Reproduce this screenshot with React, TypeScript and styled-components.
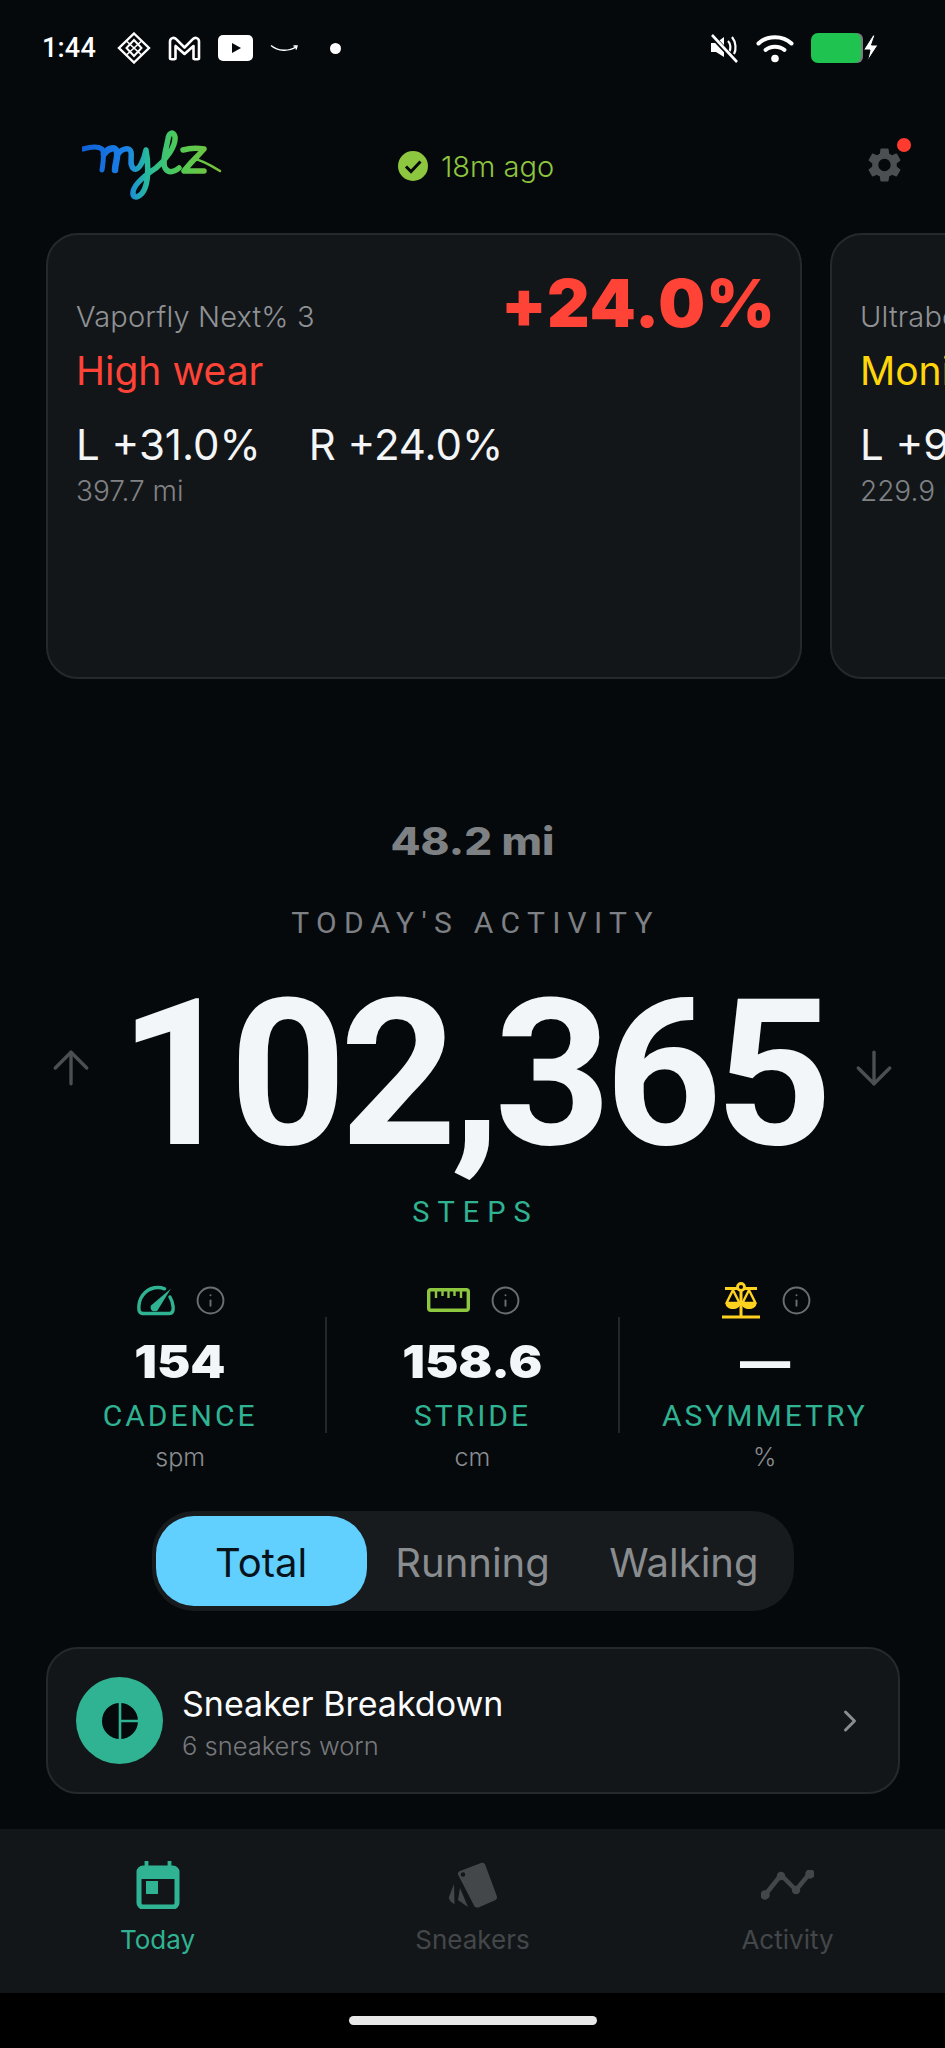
import React from 'react';
import styled, { createGlobalStyle } from 'styled-components';
import { ArrowDown, ArrowUp, ChevronRight, Info } from 'lucide-react';
import { MdSettings } from 'react-icons/md';

const teal = '#2fb392';
const lime = '#8dc63f';
const bodyFont = 'Inter, "Noto Sans", sans-serif';

const Global = createGlobalStyle`
  html, body { margin: 0; padding: 0; background: #06090c; }
  * { box-sizing: border-box; }
`;

const S = {
  Screen: styled.div`
    width: 945px;
    height: 2048px;
    overflow: hidden;
    display: flex;
    flex-direction: column;
    background: #06090c;
    color: #fff;
    font-family: ${bodyFont};
  `,
  StatusBar: styled.div`
    height: 96px;
    flex-shrink: 0;
    display: flex;
    align-items: center;
    padding: 0 64px 0 42px;
  `,
  Time: styled.span`
    font-family: Roboto, sans-serif;
    font-weight: 500;
    font-size: 27px;
    letter-spacing: 0.2px;
    margin-right: 21px;
  `,
  StatusLeft: styled.div`
    display: flex;
    align-items: center;
    gap: 17px;
  `,
  StatusDot: styled.span`
    width: 11px;
    height: 11px;
    margin-left: 14px;
    border-radius: 50%;
    background: #fff;
  `,
  StatusRight: styled.div`
    display: flex;
    align-items: center;
    gap: 17px;
    margin-left: auto;
  `,
  Header: styled.header`
    height: 137px;
    flex-shrink: 0;
    display: grid;
    grid-template-columns: 1fr auto 1fr;
    align-items: center;
    padding: 0 40px 0 47px;
  `,
  LogoSlot: styled.div`
    padding-left: 35px;
    display: flex;
  `,
  Synced: styled.div`
    display: flex;
    align-items: center;
    gap: 13px;
    padding-top: 3px;
    color: ${lime};
    font-size: 29px;
    font-weight: 300;
  `,
  GearWrap: styled.div`
    position: relative;
    justify-self: end;
    width: 41px;
    height: 44px;
    display: flex;
    align-items: center;
    justify-content: center;
    color: #4b4f52;
  `,
  GearDot: styled.span`
    position: absolute;
    top: -5px;
    right: -6px;
    width: 14px;
    height: 14px;
    border-radius: 50%;
    background: #ff3b30;
  `,
  Carousel: styled.div`
    display: flex;
    gap: 28px;
    padding-left: 46px;
    overflow: hidden;
    flex-shrink: 0;
  `,
  WearCard: styled.article`
    width: 756px;
    height: 446px;
    flex-shrink: 0;
    padding: 30px 24px 0 28px;
    background: #131619;
    border: 2px solid #26292c;
    border-radius: 32px;
  `,
  CardTop: styled.div`
    display: flex;
    justify-content: space-between;
    align-items: baseline;
  `,
  ShoeName: styled.div`
    font-size: 29px;
    font-weight: 300;
    letter-spacing: 0.15px;
    color: #8f9295;
  `,
  WearValue: styled.div<{ $color: string }>`
    font-weight: 900;
    font-size: 66px;
    line-height: 76px;
    letter-spacing: 1px;
    color: ${(p) => p.$color};
  `,
  WearStatus: styled.div<{ $color: string }>`
    font-size: 39px;
    line-height: 50px;
    margin-top: 5px;
    color: ${(p) => p.$color};
  `,
  Feet: styled.div`
    display: flex;
    gap: 48px;
    margin-top: 24px;
    font-size: 42px;
    line-height: 50px;
    color: #f3f5f7;
  `,
  Miles: styled.div`
    font-size: 28px;
    line-height: 36px;
    margin-top: 3px;
    font-weight: 300;
    color: #808285;
  `,
  Distance: styled.div`
    margin-top: 140px;
    text-align: center;
    font-weight: 800;
    font-size: 38px;
    line-height: 44px;
    color: #7e8184;
    transform: scaleX(1.15);
  `,
  Eyebrow: styled.div`
    margin-top: 40px;
    padding-left: 6px;
    text-align: center;
    font-family: Roboto, sans-serif;
    font-size: 30px;
    line-height: 40px;
    letter-spacing: 7.3px;
    color: #7d8084;
  `,
  HeroRow: styled.div`
    margin-top: 25px;
    height: 200px;
    display: flex;
    align-items: center;
    justify-content: space-between;
    padding: 0 44px;
    color: #4b4f52;
  `,
  Hero: styled.div`
    margin-top: 13px;
    font-family: Roboto, sans-serif;
    font-weight: 700;
    font-size: 204px;
    line-height: 200px;
    letter-spacing: -6.5px;
    color: #f3f6f9;
  `,
  StepsLabel: styled.div`
    margin-top: 24px;
    padding-left: 6px;
    text-align: center;
    font-family: Roboto, sans-serif;
    font-size: 29px;
    line-height: 40px;
    letter-spacing: 8px;
    color: ${teal};
  `,
  Stats: styled.section`
    margin-top: 50px;
    display: grid;
    grid-template-columns: 1fr 2px 1fr 2px 1fr;
    padding: 0 35px;
    height: 190px;
  `,
  Stat: styled.div`
    display: flex;
    flex-direction: column;
    align-items: center;
  `,
  StatDivider: styled.div`
    width: 2px;
    height: 116px;
    margin-top: 35px;
    background: #24272a;
  `,
  StatIcons: styled.div`
    height: 36px;
    display: flex;
    align-items: center;
    gap: 20px;
    padding-left: 3px;
    color: #6b6e71;
  `,
  StatValue: styled.div`
    margin-top: 18px;
    font-weight: 900;
    font-size: 46px;
    line-height: 50px;
    color: #f3f6f9;
    transform: scaleX(1.09);
  `,
  StatLabel: styled.div`
    margin-top: 12px;
    font-family: Roboto, sans-serif;
    font-size: 30px;
    line-height: 36px;
    letter-spacing: 3px;
    color: ${teal};
  `,
  StatUnit: styled.div`
    margin-top: 6px;
    font-size: 25px;
    line-height: 34px;
    font-weight: 300;
    color: #8a8d90;
  `,
  Segmented: styled.div`
    margin: 39px auto 0;
    width: 642px;
    height: 100px;
    padding: 5px 4px;
    display: grid;
    grid-template-columns: repeat(3, 1fr);
    background: #181b1e;
    border-radius: 42px;
    flex-shrink: 0;
  `,
  Segment: styled.div<{ $active?: boolean }>`
    display: flex;
    align-items: center;
    justify-content: center;
    padding-top: 3px;
    border-radius: 38px;
    font-size: 40px;
    background: ${(p) => (p.$active ? '#62d0ff' : 'transparent')};
    color: ${(p) => (p.$active ? '#07131b' : '#8a8d90')};
  `,
  Breakdown: styled.div`
    margin: 36px 45px 0 46px;
    height: 147px;
    flex-shrink: 0;
    display: flex;
    align-items: center;
    padding: 0 30px 0 28px;
    gap: 19px;
    background: #131619;
    border: 2px solid #26292c;
    border-radius: 32px;
    color: #8a8d90;
  `,
  BreakdownBadge: styled.div`
    width: 87px;
    height: 87px;
    flex-shrink: 0;
    border-radius: 50%;
    background: ${teal};
    display: flex;
    align-items: center;
    justify-content: center;
  `,
  BreakdownText: styled.div`
    flex: 1;
    padding-top: 5px;
  `,
  BreakdownTitle: styled.div`
    font-size: 34px;
    line-height: 46px;
    color: #fbfcfd;
  `,
  BreakdownSub: styled.div`
    font-size: 25.5px;
    line-height: 38px;
    font-weight: 300;
    color: #77797c;
  `,
  TabBar: styled.nav`
    margin-top: 35px;
    height: 164px;
    flex-shrink: 0;
    display: grid;
    grid-template-columns: repeat(3, 1fr);
    background: #131619;
  `,
  Tab: styled.div<{ $active?: boolean }>`
    display: flex;
    flex-direction: column;
    align-items: center;
    color: ${(p) => (p.$active ? teal : '#43474a')};
    font-size: 26px;
  `,
  TabIcon: styled.div`
    height: 50px;
    margin-top: 31px;
    display: flex;
    align-items: center;
    justify-content: center;
  `,
  TabLabel: styled.div`
    margin-top: 12px;
    line-height: 36px;
  `,
  HomeArea: styled.div`
    flex: 1;
    background: #000;
    display: flex;
    justify-content: center;
    padding-top: 23px;
  `,
  HomePill: styled.div`
    width: 248px;
    height: 9px;
    border-radius: 5px;
    background: #e8e8e8;
  `,
};

function DiamondIcon() {
  return (
    <svg width="34" height="32" viewBox="0 0 34 32" fill="none" stroke="#fff" strokeWidth="2">
      <path d="M17 1.500 32 16 17 30.500 2 16Z" strokeWidth="2.400" />
      <path d="M17 8 24.500 16 17 24 9.500 16Z" />
      <path d="M10 9.500 24 22.500M24 9.500 10 22.500" strokeWidth="1.600" />
    </svg>
  );
}

function GmailIcon() {
  return (
    <svg width="33" height="25" viewBox="0 0 33 25" fill="none" stroke="#fff" strokeWidth="2.600" strokeLinejoin="round">
      <path d="M2 22.500V5.500C2 2 6 .8 8.200 3.200L16.500 11.500 24.800 3.200C27 .8 31 2 31 5.500V22.500C31 23.500 25.500 23.500 25.500 22.500V10L16.500 18 7.500 10V22.500C7.500 23.500 2 23.500 2 22.500Z" />
    </svg>
  );
}

function YoutubeIcon() {
  return (
    <svg width="35" height="26" viewBox="0 0 35 26">
      <rect width="35" height="26" rx="5" fill="#fff" />
      <path d="M14 8 23 13 14 18Z" fill="#06090c" />
    </svg>
  );
}

function SmileIcon() {
  return (
    <svg width="29" height="10" viewBox="0 0 29 10" fill="none" stroke="#fff" strokeWidth="1.400">
      <path d="M1 2.500C8 8.500 19 8.500 26 4M23.500 3 27 3 26 6.500" />
    </svg>
  );
}

function MutedIcon() {
  return (
    <svg width="30" height="30" viewBox="0 0 30 30" fill="none">
      <path d="M2 10H7L15 4V24L7 19H2Z" fill="#fff" />
      <path d="M19 8C22 11 22 16 20 19M23 4C27 9 27.500 17 25 21" stroke="#fff" strokeWidth="2.200" />
      <path d="M3 3 27 28.500" stroke="#06090c" strokeWidth="5" />
      <path d="M3 2 28 29" stroke="#fff" strokeWidth="2.600" />
    </svg>
  );
}

function WifiIcon() {
  return (
    <svg width="38" height="29" viewBox="0 0 38 29" fill="none" stroke="#fff" strokeWidth="4" strokeLinecap="round">
      <path d="M2.500 9.500C11 1 27 1 35.500 9.500" />
      <path d="M9.500 16C14.500 11.500 23.500 11.500 28.500 16" />
      <circle cx="19" cy="24.500" r="3.800" fill="#fff" stroke="none" />
    </svg>
  );
}

function BatteryIcon() {
  return (
    <svg width="70" height="32" viewBox="0 0 70 32">
      <rect x="40" y="1" width="12" height="30" rx="6" fill="#7a7c7e" />
      <rect x="0" y="1" width="50" height="30" rx="7" fill="#1fc34f" />
      <path d="M62 3 52.500 18H59L56.500 29 67 13H60.500L64 3Z" fill="#fff" stroke="#06090c" strokeWidth="1" />
    </svg>
  );
}

function Logo() {
  return (
    <svg width="140" height="70" viewBox="0 0 140 70" fill="none">
      <defs>
        <linearGradient id="mylz" gradientUnits="userSpaceOnUse" x1="0" y1="0" x2="140" y2="0">
          <stop offset="0" stopColor="#0f5fd6" />
          <stop offset="0.32" stopColor="#1b82e8" />
          <stop offset="0.46" stopColor="#25b9a0" />
          <stop offset="0.68" stopColor="#4fca55" />
          <stop offset="1" stopColor="#7fc23a" />
        </linearGradient>
      </defs>
      <g stroke="url(#mylz)" strokeLinecap="round" strokeLinejoin="round">
        <path d="M1 19C8 17 16 16 20 19C23 23 21 33 20 40" strokeWidth="5" />
        <path d="M22 24C26 18 34 16 35 22C36 28 33 34 33 40" strokeWidth="6.500" />
        <path d="M36 24C40 18 48 17 49 22C50 28 47 36 52 39C57 41 62 30 64 20C66 30 67 48 63 58C60 66 52 70 51 64C50 56 62 46 74 38C84 30 94 16 93 7C92 1 87 2 86 9C84 20 80 32 83 38C86 43 91 43 97 38" strokeWidth="5.500" />
        <path d="M101 20C108 18 115 18 122 19C116 26 108 33 102 41C108 41 115 41 122 41" strokeWidth="5.500" />
        <path d="M112 29C120 30 130 36 138 41" strokeWidth="2.500" />
      </g>
    </svg>
  );
}

function CheckBadge() {
  return (
    <svg width="30" height="30" viewBox="0 0 30 30">
      <circle cx="15" cy="15" r="15" fill={lime} />
      <path d="M8 15.500 13 20.500 22.500 10.500" fill="none" stroke="#06090c" strokeWidth="3" />
    </svg>
  );
}

function GaugeIcon() {
  return (
    <svg width="38" height="31" viewBox="0 0 38 31" fill="none" stroke={teal} strokeWidth="3.400" strokeLinecap="round" strokeLinejoin="round">
      <path d="M6 28.500H32C36 28.500 36.500 25 36 21C35.500 17.500 34.500 14.500 33 12" />
      <path d="M6 28.500C2 28.500 1.500 25 2 20C3 10 11 2.500 21 2.500C23.500 2.500 25.500 3 27.500 3.800" />
      <path d="M14 20.500 34 3.500 20.500 25.500C18.500 27 15 26.500 14 24.500C13.500 23 13.500 21.500 14 20.500Z" fill={teal} stroke="none" />
    </svg>
  );
}

function RulerIcon() {
  return (
    <svg width="43" height="24" viewBox="0 0 43 24" fill="none" stroke={lime} strokeWidth="3.400">
      <rect x="1.700" y="1.700" width="39.600" height="20.600" rx="2" />
      <path d="M9 2V10M15.500 2V8M21.500 2V10M27.500 2V8M34 2V10" strokeWidth="2.400" />
    </svg>
  );
}

function BalanceIcon() {
  const c = '#ffd21f';
  return (
    <svg width="40" height="37" viewBox="0 0 40 37" fill="none" stroke={c} strokeWidth="2.400" strokeLinejoin="round">
      <path d="M4 6.500H36M20 8V34M1 35H39" strokeWidth="3" />
      <circle cx="20" cy="5" r="3.500" fill="#06090c" strokeWidth="2.800" />
      <path d="M12 8 5.500 21H18.500Z" />
      <path d="M28 8 21.500 21H34.500Z" />
      <path d="M4.500 21H19.500C19.500 29 4.500 29 4.500 21Z" fill={c} stroke="none" />
      <path d="M20.500 21H35.500C35.500 29 20.500 29 20.500 21Z" fill={c} stroke="none" />
    </svg>
  );
}

function PieIcon() {
  return (
    <svg width="36" height="36" viewBox="0 0 36 36">
      <circle cx="18" cy="18" r="18" fill="#06090c" />
      <path d="M18 0V36M18 18H36" stroke={teal} strokeWidth="2.600" />
    </svg>
  );
}

function CalendarIcon() {
  return (
    <svg width="44" height="48" viewBox="0 0 44 48" fill="none" stroke="currentColor">
      <path d="M10.500 0V6M33.500 0V6" strokeWidth="3.800" strokeLinecap="round" />
      <rect x="3" y="7" width="38" height="39" rx="4" strokeWidth="5" />
      <rect x="1" y="8" width="42" height="10" fill="currentColor" stroke="none" />
      <rect x="10" y="20" width="12" height="13" fill="currentColor" stroke="none" />
    </svg>
  );
}

function SneakersIcon() {
  return (
    <svg width="50" height="46" viewBox="0 0 50 46" fill="currentColor">
      <path d="M12 9 33 1C35 .3 36.500 1 37.200 2.800L48.800 34C49.500 36 48.800 37.500 47 38.300L30.500 45.400C28.500 46 27 45.400 26 43.500L10 12.500C9.500 11 10.500 9.500 12 9Z" />
      <circle cx="15" cy="12.500" r="2.200" fill="#131619" />
      <path d="M6 22 1 35C.7 37 2 40 6.500 42Z" />
      <path d="M12 26 20 45 10 38Z" />
    </svg>
  );
}

function ActivityIcon() {
  return (
    <svg width="53" height="30" viewBox="0 0 53 30" fill="none" stroke="currentColor" strokeWidth="4.500" strokeLinecap="round" strokeLinejoin="round">
      <path d="M4 25 20 5 35 20 49 3" />
      <circle cx="4" cy="25" r="2.500" fill="currentColor" />
      <circle cx="20" cy="6" r="2" fill="currentColor" />
      <circle cx="35" cy="20" r="2" fill="currentColor" />
      <circle cx="49" cy="4" r="2.500" fill="currentColor" />
    </svg>
  );
}

const wearCards = [
  { name: 'Vaporfly Next% 3', value: '+24.0%', status: 'High wear', color: '#ff4336', left: 'L +31.0%', right: 'R +24.0%', miles: '397.7 mi' },
  { name: 'Ultraboost Light', value: '+9.0%', status: 'Monitor', color: '#ffd60a', left: 'L +9.0%', right: 'R +6.0%', miles: '229.9 mi' },
];

const stats = [
  { icon: <GaugeIcon />, value: '154', label: 'CADENCE', unit: 'spm' },
  { icon: <RulerIcon />, value: '158.6', label: 'STRIDE', unit: 'cm' },
  { icon: <BalanceIcon />, value: '—', label: 'ASYMMETRY', unit: '%' },
];

export default function App() {
  return (
    <S.Screen>
      <Global />
      <S.StatusBar>
        <S.Time>1:44</S.Time>
        <S.StatusLeft>
          <DiamondIcon />
          <GmailIcon />
          <YoutubeIcon />
          <SmileIcon />
          <S.StatusDot />
        </S.StatusLeft>
        <S.StatusRight>
          <MutedIcon />
          <WifiIcon />
          <BatteryIcon />
        </S.StatusRight>
      </S.StatusBar>

      <S.Header>
        <S.LogoSlot>
          <Logo />
        </S.LogoSlot>
        <S.Synced>
          <CheckBadge />
          18m ago
        </S.Synced>
        <S.GearWrap>
          <MdSettings size={52} />
          <S.GearDot />
        </S.GearWrap>
      </S.Header>

      <S.Carousel>
        {wearCards.map((card) => (
          <S.WearCard key={card.name}>
            <S.CardTop>
              <S.ShoeName>{card.name}</S.ShoeName>
              <S.WearValue $color={card.color}>{card.value}</S.WearValue>
            </S.CardTop>
            <S.WearStatus $color={card.color}>{card.status}</S.WearStatus>
            <S.Feet>
              <span>{card.left}</span>
              <span>{card.right}</span>
            </S.Feet>
            <S.Miles>{card.miles}</S.Miles>
          </S.WearCard>
        ))}
      </S.Carousel>

      <S.Distance>48.2 mi</S.Distance>
      <S.Eyebrow>TODAY'S ACTIVITY</S.Eyebrow>
      <S.HeroRow>
        <ArrowUp size={54} strokeWidth={1.5} />
        <S.Hero>102,365</S.Hero>
        <ArrowDown size={54} strokeWidth={1.5} />
      </S.HeroRow>
      <S.StepsLabel>STEPS</S.StepsLabel>

      <S.Stats>
        {stats.map((stat, i) => (
          <React.Fragment key={stat.label}>
            {i > 0 && <S.StatDivider />}
            <S.Stat>
              <S.StatIcons>
                {stat.icon}
                <Info size={31} strokeWidth={1.5} />
              </S.StatIcons>
              <S.StatValue>{stat.value}</S.StatValue>
              <S.StatLabel>{stat.label}</S.StatLabel>
              <S.StatUnit>{stat.unit}</S.StatUnit>
            </S.Stat>
          </React.Fragment>
        ))}
      </S.Stats>

      <S.Segmented>
        <S.Segment $active>Total</S.Segment>
        <S.Segment>Running</S.Segment>
        <S.Segment>Walking</S.Segment>
      </S.Segmented>

      <S.Breakdown>
        <S.BreakdownBadge>
          <PieIcon />
        </S.BreakdownBadge>
        <S.BreakdownText>
          <S.BreakdownTitle>Sneaker Breakdown</S.BreakdownTitle>
          <S.BreakdownSub>6 sneakers worn</S.BreakdownSub>
        </S.BreakdownText>
        <ChevronRight size={36} strokeWidth={2} />
      </S.Breakdown>

      <S.TabBar>
        <S.Tab $active>
          <S.TabIcon>
            <CalendarIcon />
          </S.TabIcon>
          <S.TabLabel>Today</S.TabLabel>
        </S.Tab>
        <S.Tab>
          <S.TabIcon>
            <SneakersIcon />
          </S.TabIcon>
          <S.TabLabel>Sneakers</S.TabLabel>
        </S.Tab>
        <S.Tab>
          <S.TabIcon>
            <ActivityIcon />
          </S.TabIcon>
          <S.TabLabel>Activity</S.TabLabel>
        </S.Tab>
      </S.TabBar>
      <S.HomeArea>
        <S.HomePill />
      </S.HomeArea>
    </S.Screen>
  );
}
